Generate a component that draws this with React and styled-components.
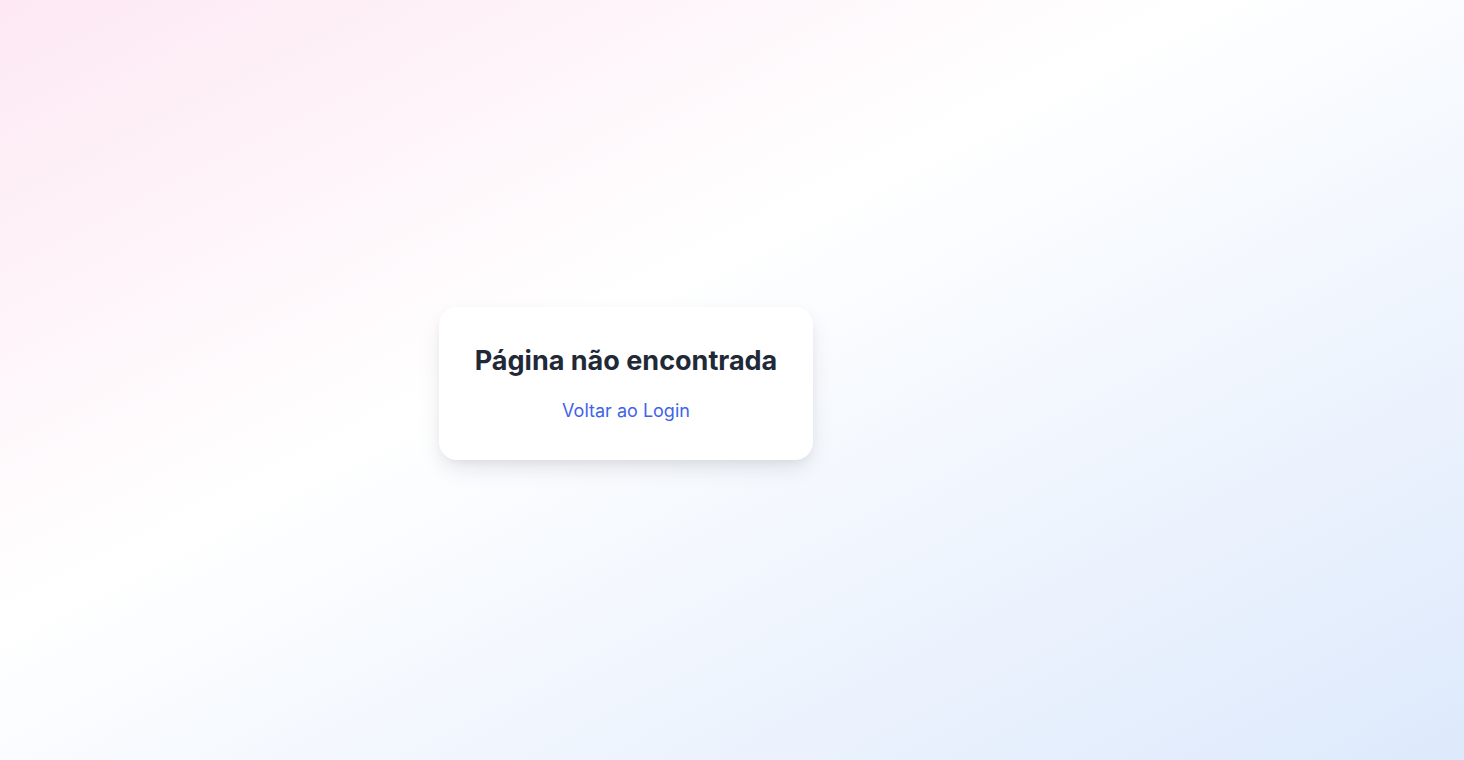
import React from "react";
import styled, { createGlobalStyle } from "styled-components";

const GlobalStyle = createGlobalStyle`
    * {
        box-sizing: border-box;
    }
    html,
    body {
        margin: 0;
        padding: 0;
        font-family: Inter, "Noto Sans", "Liberation Sans", sans-serif;
    }
`;

const Page = styled.div`
    min-height: 100vh;
    width: 100%;
    display: flex;
    align-items: center;
    justify-content: center;
    padding: 7px 212px 0 0;
    background: linear-gradient(to bottom right, #fde8f3 0%, #ffffff 41%, #dde9fc 100%);
`;

const Card = styled.div`
    width: 374px;
    padding: 36px 24px 35px;
    background-color: #ffffff;
    border-radius: 18px;
    box-shadow: 0 10px 24px -4px rgba(15, 23, 42, 0.12), 0 4px 8px -2px rgba(15, 23, 42, 0.05);
    text-align: center;
`;

const Title = styled.h1`
    margin: 0 0 18px;
    font-size: 27px;
    line-height: 36px;
    font-weight: 700;
    color: #1f2937;
`;

const BackLink = styled.a`
    display: inline-block;
    font-size: 18px;
    line-height: 28px;
    color: #3f63ea;
    text-decoration: none;
    cursor: pointer;

    &:hover {
        text-decoration: underline;
    }
`;

const App = () => {
    return (
        <>
            <GlobalStyle />
            <Page>
                <Card>
                    <Title>Página não encontrada</Title>
                    <BackLink href="#/login">Voltar ao Login</BackLink>
                </Card>
            </Page>
        </>
    );
};

export default App;
